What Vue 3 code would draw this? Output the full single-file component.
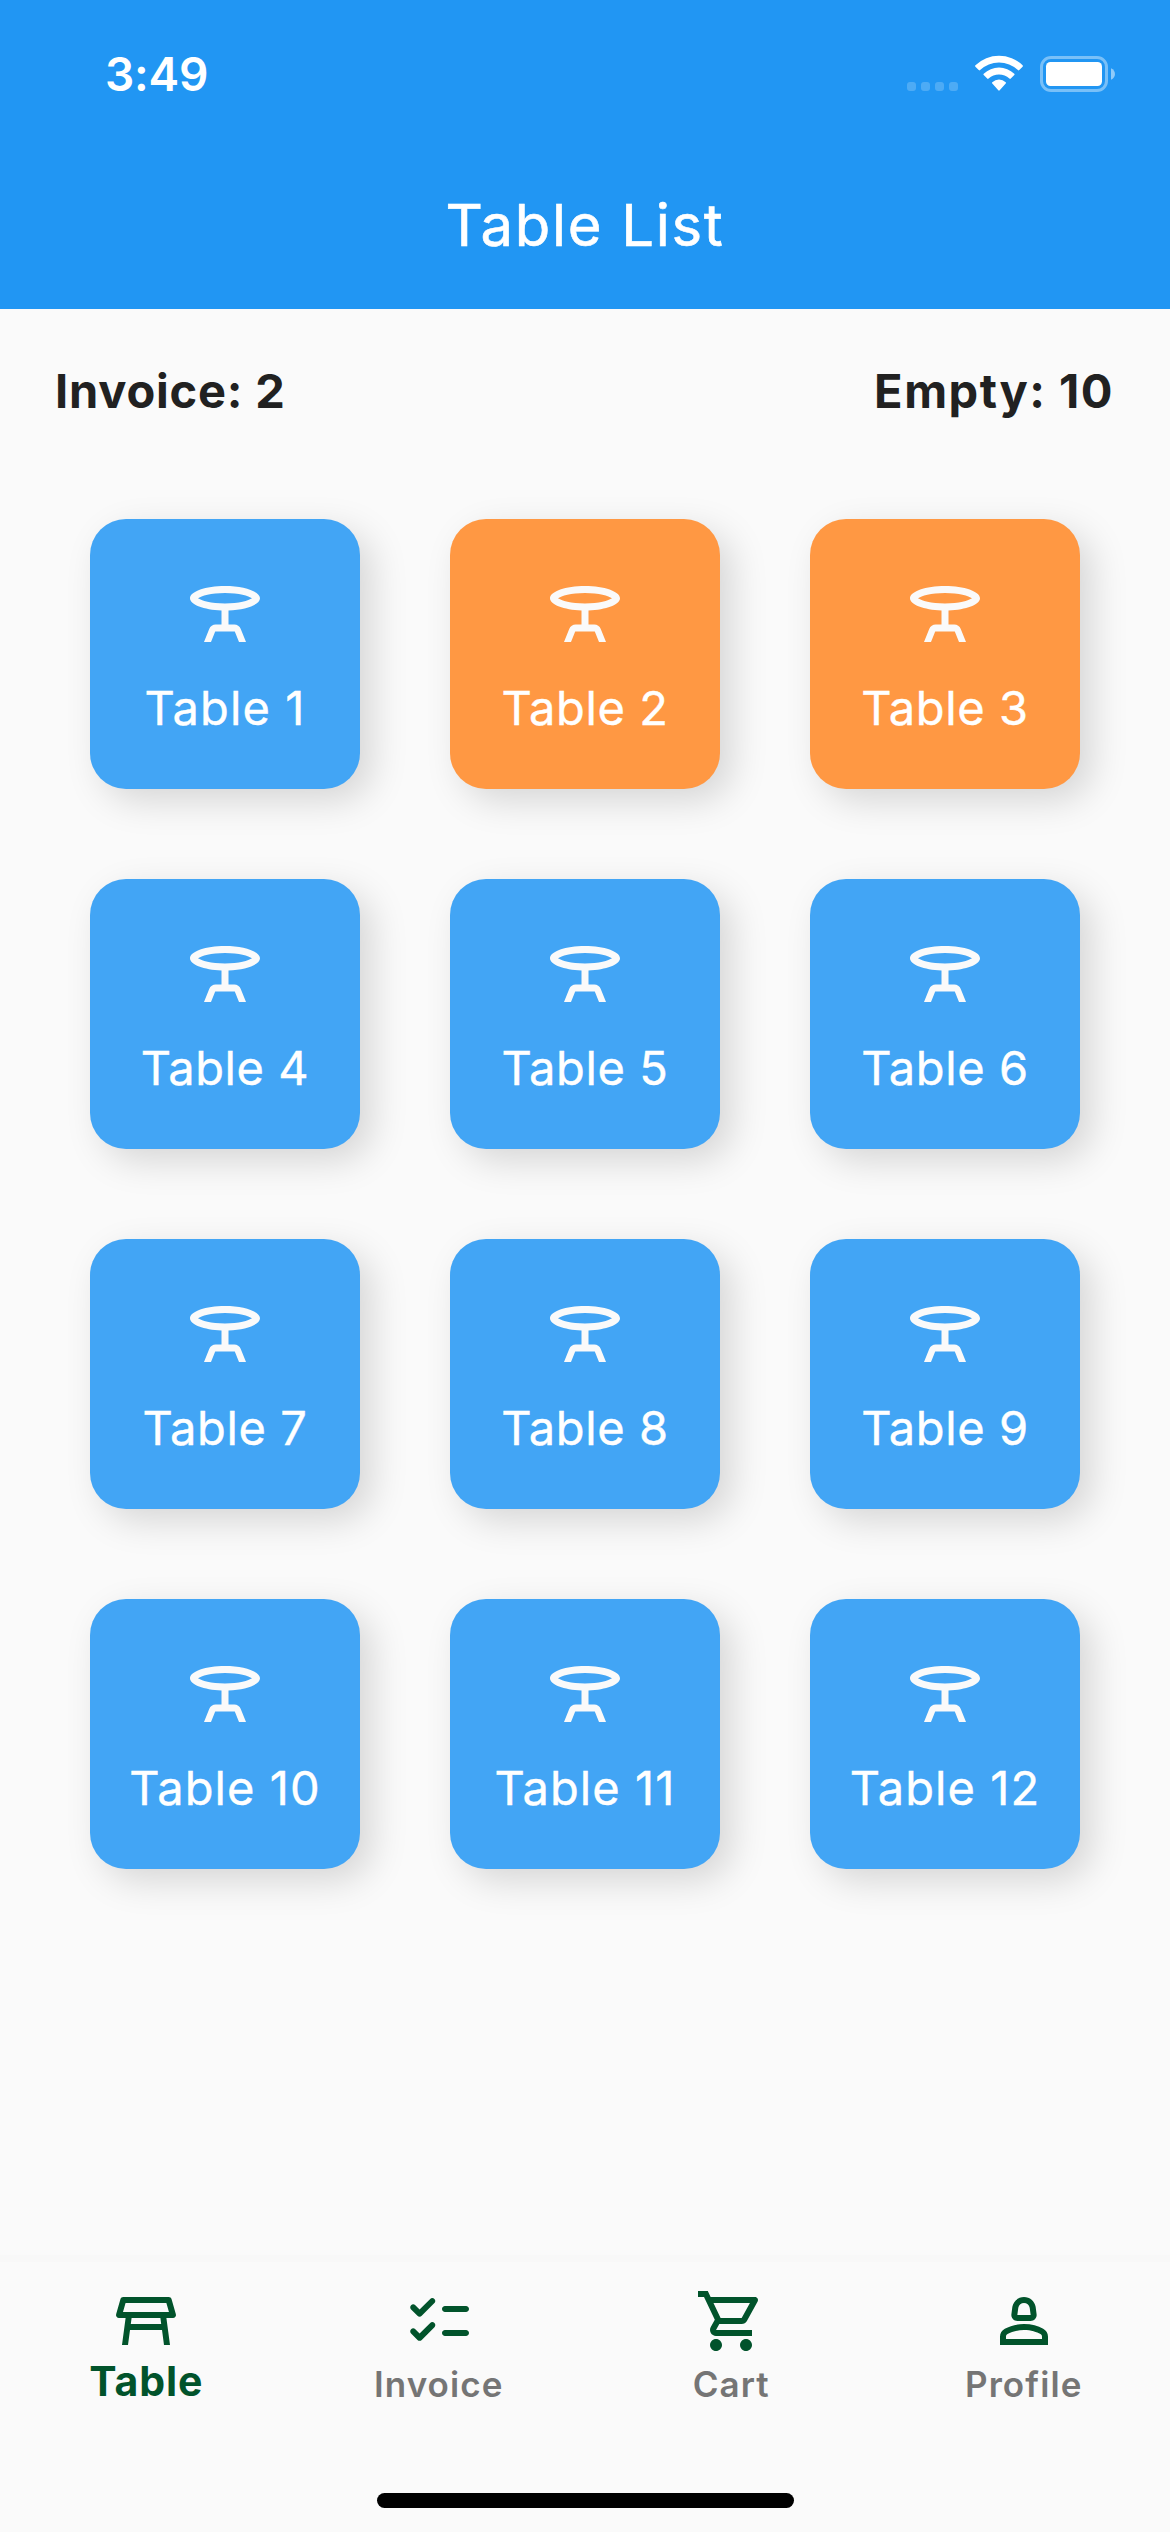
<script setup>
const tables = Array.from({ length: 12 }, (_, i) => ({
  id: i + 1,
  busy: i === 1 || i === 2,
  loose: String(i + 1).includes('1'),
}))

const tabs = [
  {
    label: 'Table',
    active: true,
    path: 'M21.96,9.73l-1.43-5C20.41,4.3,20.02,4,19.57,4H4.43C3.98,4,3.59,4.3,3.47,4.73l-1.43,5C1.86,10.36,2.34,11,3,11h2.2L4,20h2l0.67-5h10.67L18,20h2l-1.2-9H21C21.66,11,22.14,10.36,21.96,9.73z M16.8,11l0.27,2H6.93l0.27-2H16.8z M4.33,9l0.86-3h13.6l0.86,3H4.33z',
  },
  {
    label: 'Invoice',
    path: 'M22,8c0-0.55-0.45-1-1-1h-7c-0.55,0-1,0.45-1,1s0.45,1,1,1h7C21.55,9,22,8.55,22,8z M13,16c0,0.55,0.45,1,1,1h7c0.55,0,1-0.45,1-1c0-0.55-0.45-1-1-1h-7C13.45,15,13,15.45,13,16z M10.47,4.63c0.39,0.39,0.39,1.02,0,1.41l-4.23,4.25c-0.39,0.39-1.02,0.39-1.42,0L2.7,8.16c-0.39-0.39-0.39-1.02,0-1.41c0.39-0.39,1.02-0.39,1.41,0l1.42,1.42l3.54-3.54C9.45,4.25,10.09,4.25,10.47,4.63z M10.48,12.64c0.39,0.39,0.39,1.02,0,1.41l-4.23,4.25c-0.39,0.39-1.02,0.39-1.42,0L2.7,16.16c-0.39-0.39-0.39-1.02,0-1.41c0.39-0.39,1.02-0.39,1.41,0l1.42,1.42l3.54-3.54C9.45,12.25,10.09,12.25,10.48,12.64z',
  },
  {
    label: 'Cart',
    path: 'M15.55 13c.75 0 1.41-.41 1.75-1.03l3.58-6.49c.37-.66-.11-1.48-.87-1.48H5.21l-.94-2H1v2h2l3.6 7.59-1.35 2.44C4.52 15.37 5.48 17 7 17h12v-2H7l1.1-2h7.45zM6.16 6h12.15l-2.76 5H8.53L6.16 6zM7 18c-1.1 0-1.99.9-1.99 2S5.9 22 7 22s2-.9 2-2-.9-2-2-2zm10 0c-1.1 0-1.99.9-1.99 2s.89 2 1.99 2 2-.9 2-2-.9-2-2-2z',
  },
  {
    label: 'Profile',
    path: 'M18.39,14.56C16.71,13.7,14.53,13,12,13c-2.53,0-4.71,0.7-6.39,1.56C4.61,15.07,4,16.1,4,17.22V20h16v-2.78C20,16.1,19.39,15.07,18.39,14.56z M18,18H6v-0.78c0-0.38,0.2-0.72,0.52-0.88C7.71,15.73,9.63,15,12,15c2.37,0,4.29,0.73,5.48,1.34C17.8,16.5,18,16.84,18,17.22V18z M9.78,12h4.44c1.21,0,2.14-1.06,1.98-2.26l-0.32-2.45C15.57,5.39,13.92,4,12,4S8.43,5.39,8.12,7.29L7.8,9.74C7.64,10.94,8.57,12,9.78,12z M10.1,7.59C10.29,6.67,11.07,6,12,6s1.71,0.67,1.9,1.59L14.22,10H9.78L10.1,7.59z',
  },
]
</script>

<template>
  <div class="screen">
    <header class="header">
      <div class="status">
        <span class="time">3:49</span>
        <div class="indicators">
          <div class="signal"><i v-for="n in 4" :key="n"></i></div>
          <svg class="wifi" viewBox="0 0 48 36">
            <path d="M0.4 10.2 A34 34 0 0 1 47.6 10.2 Q48.3 11 47.6 11.7 L44.3 15.1 Q43.6 15.7 42.9 15.1 A27.5 27.5 0 0 0 5.1 15.1 Q4.4 15.7 3.7 15.1 L0.4 11.7 Q-0.3 11 0.4 10.2Z" />
            <path d="M8.7 18.7 A22.3 22.3 0 0 1 39.3 18.7 Q40 19.4 39.3 20.1 L35.8 23.6 Q35.1 24.2 34.4 23.6 A15.3 15.3 0 0 0 13.6 23.6 Q12.9 24.2 12.2 23.6 L8.7 20.1 Q8 19.4 8.7 18.7Z" />
            <path d="M17.3 27.2 A10 10 0 0 1 30.7 27.2 Q31.3 27.9 30.7 28.6 L24.7 35.3 Q24 36.1 23.3 35.3 L17.3 28.6 Q16.7 27.9 17.3 27.2Z" />
          </svg>
          <svg class="battery" viewBox="0 0 75 36">
            <rect x="1.5" y="1.5" width="65" height="33" rx="9.5" class="shell" />
            <rect x="6" y="6" width="56" height="24" rx="4.5" />
            <path d="M71 12.3 C76.3 14.5 76.3 21.5 71 23.7Z" class="nub" />
          </svg>
        </div>
      </div>
      <h1 class="title">Table List</h1>
    </header>

    <section class="summary">
      <span class="invoice-count">Invoice: 2</span>
      <span class="empty-count">Empty: 10</span>
    </section>

    <main class="grid">
      <article v-for="t in tables" :key="t.id" class="card" :class="{ busy: t.busy, loose: t.loose }">
        <svg class="card-icon" viewBox="0 0 24 24">
          <path d="M22,7.5C22,5.57,17.52,4,12,4S2,5.57,2,7.5c0,1.81,3.95,3.31,9,3.48V15H9.35c-0.82,0-1.55,0.5-1.86,1.26L6,20h2l1.2-3h5.6L16,20h2l-1.5-3.74C16.2,15.5,15.46,15,14.65,15H13v-4.02C18.05,10.81,22,9.31,22,7.5z M12,6c4.05,0,6.74,0.86,7.72,1.5C18.74,8.14,16.05,9,12,9S5.26,8.14,4.28,7.5C5.26,6.86,7.95,6,12,6z" />
        </svg>
        <span class="card-label">Table {{ t.id }}</span>
      </article>
    </main>

    <nav class="nav">
      <div class="tabs">
        <div v-for="tab in tabs" :key="tab.label" class="tab" :class="{ active: tab.active }">
          <svg class="tab-icon" viewBox="0 0 24 24"><path :d="tab.path" /></svg>
          <span class="tab-label">{{ tab.label }}</span>
        </div>
      </div>
      <div class="home-bar"></div>
    </nav>
  </div>
</template>

<style>
body {
  margin: 0;
  background: #fafafa;
}
</style>

<style scoped>
.screen {
  width: 1170px;
  height: 2532px;
  display: flex;
  flex-direction: column;
  background: #fafafa;
  font-family: Inter, sans-serif;
  color: #212121;
  overflow: hidden;
  white-space: nowrap;
}

.header {
  height: 309px;
  flex: none;
  background: #2196f3;
  color: #fff;
}

.status {
  height: 141px;
  display: flex;
  justify-content: space-between;
  align-items: flex-start;
  box-sizing: border-box;
  padding: 55px 55px 0 105px;
}

.time {
  font-size: 46px;
  line-height: 39px;
  font-weight: 600;
  letter-spacing: -0.2px;
}

.indicators {
  display: flex;
  align-items: flex-start;
}

.signal {
  display: flex;
  gap: 5px;
  margin: 27px 17px 0 0;
}

.signal i {
  width: 9px;
  height: 9px;
  border-radius: 3px;
  background: rgba(255, 255, 255, 0.2);
}

.wifi {
  width: 48px;
  height: 36px;
  margin-right: 17px;
  fill: #fff;
}

.battery {
  width: 75px;
  height: 36px;
  margin-top: 1px;
  fill: #fff;
}

.battery .shell {
  fill: none;
  stroke: #fff;
  stroke-width: 3;
  stroke-opacity: 0.4;
}

.battery .nub {
  fill-opacity: 0.5;
}

.title {
  margin: 0;
  height: 168px;
  line-height: 168px;
  text-align: center;
  font-size: 58px;
  font-weight: 400;
  letter-spacing: 1.7px;
  -webkit-text-stroke: 0.6px currentColor;
}

.summary {
  height: 165px;
  flex: none;
  box-sizing: border-box;
  padding: 52px 56px 0 55px;
  display: flex;
  justify-content: space-between;
  font-size: 47px;
  line-height: 60px;
  font-weight: 700;
}

.invoice-count {
  letter-spacing: 0.8px;
}

.empty-count {
  letter-spacing: 1.5px;
}

.grid {
  flex: 1;
  display: grid;
  grid-template-columns: repeat(3, 270px);
  grid-auto-rows: 270px;
  align-content: start;
  gap: 90px;
  padding: 45px 90px 0;
}

.card {
  border-radius: 36px;
  background: #42a5f5;
  color: #fff;
  box-shadow: 12px 12px 36px rgba(0, 0, 0, 0.145);
  display: flex;
  flex-direction: column;
  align-items: center;
  box-sizing: border-box;
  padding-top: 53px;
}

.card.busy {
  background: #ff9843;
}

.card-icon {
  width: 84px;
  height: 84px;
  fill: #fafafa;
}

.card-label {
  margin-top: 24px;
  font-size: 47px;
  line-height: 56px;
  font-weight: 400;
  letter-spacing: 0.6px;
  -webkit-text-stroke: 0.4px currentColor;
}

.card.loose .card-label {
  letter-spacing: 1.1px;
}

.nav {
  flex: none;
  height: 277px;
  box-sizing: border-box;
  border-top: 7px solid #f8f8f8;
  background: #fafafa;
  display: flex;
  flex-direction: column;
  align-items: center;
}

.tabs {
  width: 100%;
  height: 231px;
  display: flex;
}

.tab {
  flex: 1;
  display: flex;
  flex-direction: column;
  align-items: center;
  padding-top: 23px;
  color: #757575;
}

.tab-icon {
  width: 72px;
  height: 72px;
  fill: #01532b;
}

.tab-label {
  font-size: 35px;
  line-height: 54px;
  font-weight: 600;
  letter-spacing: 1.1px;
}

.tab.active .tab-label {
  font-size: 41px;
  line-height: 48px;
  font-weight: 700;
  letter-spacing: 0.9px;
  color: #01532b;
}

.home-bar {
  width: 417px;
  height: 15px;
  border-radius: 8px;
  background: #000;
}
</style>
